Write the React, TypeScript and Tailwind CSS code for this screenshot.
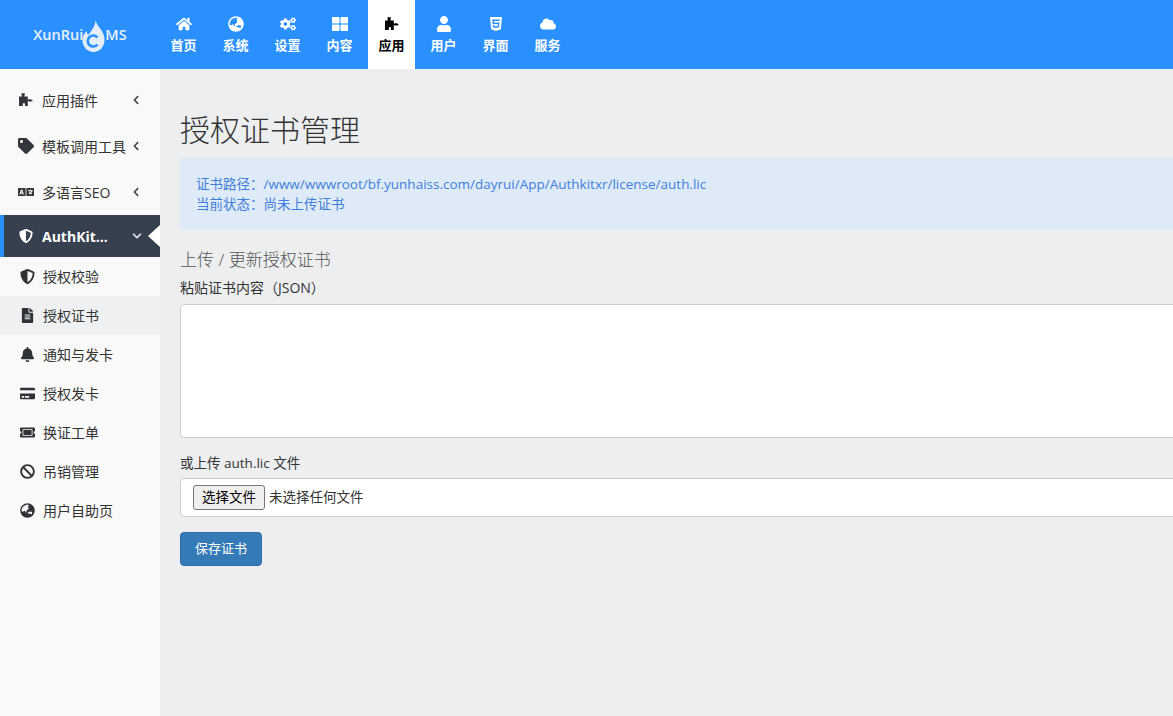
import { FaHome, FaGlobeAsia, FaCogs, FaThLarge, FaUser, FaHtml5, FaCloud, FaTag, FaLanguage, FaShieldAlt, FaFileAlt, FaBell, FaCreditCard, FaTicketAlt, FaBan, FaChevronLeft, FaChevronDown } from "react-icons/fa";
import type { ComponentType } from "react";

const font = "font-['Open_Sans','Noto_Sans_CJK_SC',sans-serif]";

function Puzzle({ className }: { className?: string }) {
  return (
    <svg viewBox="0 0 16 16" className={className} fill="currentColor">
      <path d="M4.2 1.2h2.6v1.4c0 .5-.4.8-.4 1.2V4.6h3.4v3.2c.4 0 .7-.5 1.3-.5h1.2c.6 0 1 .4 1.5.4.4 0 .8.2.8.7s-.4.8-.8.8c-.5 0-.9.3-1.5.3h-1.2c-.6 0-.9-.4-1.3-.4V14H7v-1.4c0-.9-.4-1.5-1.1-1.5s-1.1.6-1.1 1.5V14H1V4.6h2.8V3.8c0-.4-.4-.7-.4-1.2 0-.8.2-1.4.8-1.4z" />
    </svg>
  );
}

const topNav: { label: string; icon: ComponentType<{ className?: string }>; active?: boolean }[] = [
  { label: "首页", icon: FaHome },
  { label: "系统", icon: FaGlobeAsia },
  { label: "设置", icon: FaCogs },
  { label: "内容", icon: FaThLarge },
  { label: "应用", icon: Puzzle, active: true },
  { label: "用户", icon: FaUser },
  { label: "界面", icon: FaHtml5 },
  { label: "服务", icon: FaCloud },
];

const subMenu: { label: string; icon: ComponentType<{ className?: string }>; active?: boolean }[] = [
  { label: "授权校验", icon: FaShieldAlt },
  { label: "授权证书", icon: FaFileAlt, active: true },
  { label: "通知与发卡", icon: FaBell },
  { label: "授权发卡", icon: FaCreditCard },
  { label: "换证工单", icon: FaTicketAlt },
  { label: "吊销管理", icon: FaBan },
  { label: "用户自助页", icon: FaGlobeAsia },
];

const groups: { label: string; icon: ComponentType<{ className?: string }> }[] = [
  { label: "应用插件", icon: Puzzle },
  { label: "模板调用工具", icon: FaTag },
  { label: "多语言SEO", icon: FaLanguage },
];

export default function App() {
  return (
    <div className={`h-[716px] w-[1173px] overflow-hidden bg-[#eceef0] ${font}`}>
      {/* top bar */}
      <header className="flex h-[69px] bg-[#2b90ff]">
        <div className="flex w-[160px] shrink-0 items-center justify-center pl-[0px] text-[14.5px] font-semibold text-[#e8f1fb]">
          <span>XunRui</span>
          <span className="relative flex h-[24px] w-[22px] items-center justify-center">
            <svg viewBox="0 0 22 32" className="absolute bottom-[-5px] left-[-1px] h-[32px] w-[23px]" fill="#e4eef9">
              <path d="M13 0c1 4 3 6 5 9 2 3 4 6 4 11 0 7-5 12-11 12S0 27 0 20c0-4 2-7 4-9 0 2 1 3 2 4 1-2 2-3 4-6 2-3 3-6 3-9z" />
              <path d="M15 17.5a5.5 5.5 0 1 0 0 7" fill="none" stroke="#2b90ff" strokeWidth="2.6" />
            </svg>
          </span>
          <span>MS</span>
        </div>
        <nav className="flex pl-[0px]">
          {topNav.map((item) => (
            <div
              key={item.label}
              className={`flex h-[69px] w-[47px] flex-col items-center pt-[16px] mr-[5px] text-[13px] font-semibold ${item.active ? "bg-white text-black" : "text-white"}`}
            >
              <item.icon className="h-[16px] w-[16px]" />
              <span className="mt-[3px] leading-[20px]">{item.label}</span>
            </div>
          ))}
        </nav>
      </header>

      <div className="flex h-[647px]">
        {/* sidebar */}
        <aside className="w-[160px] shrink-0 bg-[#f9f9f9] pt-[8px] text-[14px] text-[#333]">
          <div className="h-0" />
          {groups.map((g) => (
            <div key={g.label} className="flex h-[46px] items-center pl-[18px] pr-[20px]">
              <g.icon className="h-[16px] w-[16px] shrink-0 text-[#32353a]" />
              <span className="ml-[8px] w-[92px] truncate">{g.label}</span>
              <FaChevronLeft className="ml-auto h-[10px] w-[8px] shrink-0 text-[#444]" />
            </div>
          ))}
          <div className="relative flex h-[42px] items-center border-l-[4px] border-[#2b90ff] bg-[#36404f] pl-[15px] pr-[18px] font-bold text-white">
            <FaShieldAlt className="h-[14px] w-[14px] shrink-0" />
            <span className="ml-[9px] w-[66px] truncate">AuthKitxr</span>
            <FaChevronDown className="ml-auto h-[10px] w-[10px] shrink-0 text-[#dfe3e8]" />
            <span className="absolute right-0 top-[10px] h-0 w-0 border-y-[11px] border-r-[12px] border-y-transparent border-r-white" />
          </div>
          {subMenu.map((s) => (
            <div key={s.label} className={`flex h-[39px] items-center pl-[20px] ${s.active ? "bg-[#eef0f2]" : ""}`}>
              <s.icon className="h-[15px] w-[15px] shrink-0 text-[#2f3237]" />
              <span className="ml-[8px]">{s.label}</span>
            </div>
          ))}
        </aside>

        {/* main */}
        <main className="w-[1300px] shrink-0 px-[20px] pt-[41px] text-[#333]">
          <h1 className="text-[30px] font-light leading-[40px] text-[#333]">授权证书管理</h1>
          <div className="mt-[8px] h-[72px] rounded-[4px] bg-[#deeaf8] px-[16px] pt-[16px] text-[13.5px] leading-[20px] text-[#3f7fd9]">
            <p>证书路径：/www/wwwroot/bf.yunhaiss.com/dayrui/App/Authkitxr/license/auth.lic</p>
            <p>当前状态：尚未上传证书</p>
          </div>
          <h2 className="mt-[18px] text-[17px] font-light leading-[24px] text-[#555]">上传 / 更新授权证书</h2>
          <label className="mt-[6px] block text-[14px] leading-[20px]">粘贴证书内容（JSON）</label>
          <div className="mt-[6px] h-[134px] rounded-[4px] border border-[#ccc] bg-white" />
          <label className="mt-[15px] block text-[13.5px] leading-[20px]">或上传 auth.lic 文件</label>
          <div className="mt-[5px] flex h-[39px] items-center rounded-[4px] border border-[#ccc] bg-white pl-[12px] text-[13.5px]">
            <span className="flex h-[25px] w-[72px] items-center justify-center rounded-[3px] border border-[#767676] bg-[#efefef] text-black">选择文件</span>
            <span className="ml-[4px]">未选择任何文件</span>
          </div>
          <button className="mt-[15px] block h-[34px] w-[82px] rounded-[4px] border border-[#2e6da4] bg-[#337ab7] text-[13px] text-white">保存证书</button>
        </main>
      </div>
    </div>
  );
}
